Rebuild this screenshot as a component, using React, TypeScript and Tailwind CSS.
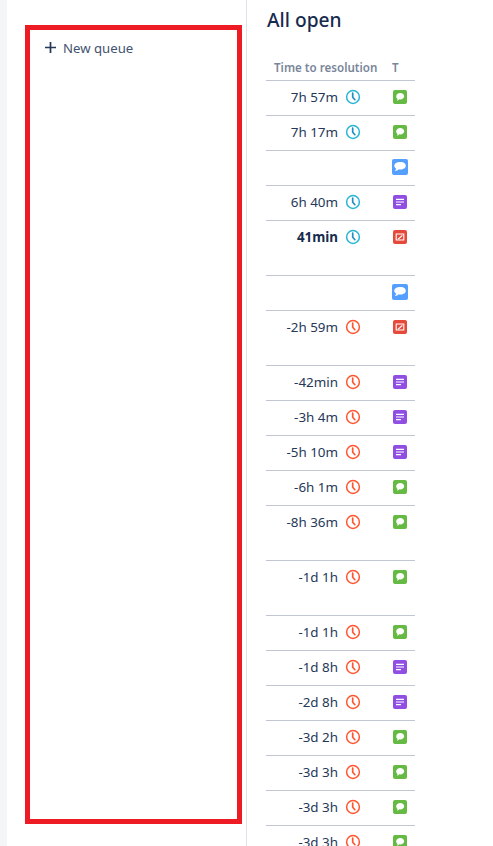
const font = { fontFamily: '"Noto Sans", "Open Sans", sans-serif' };

type Kind = "chat" | "bubble" | "note" | "incident";
type Row = { time?: string; over?: boolean; bold?: boolean; kind: Kind; tall?: boolean };

const rows: Row[] = [
  { time: "7h 57m", kind: "chat" },
  { time: "7h 17m", kind: "chat" },
  { kind: "bubble" },
  { time: "6h 40m", kind: "note" },
  { time: "41min", bold: true, kind: "incident", tall: true },
  { kind: "bubble" },
  { time: "-2h 59m", over: true, kind: "incident", tall: true },
  { time: "-42min", over: true, kind: "note" },
  { time: "-3h 4m", over: true, kind: "note" },
  { time: "-5h 10m", over: true, kind: "note" },
  { time: "-6h 1m", over: true, kind: "chat" },
  { time: "-8h 36m", over: true, kind: "chat", tall: true },
  { time: "-1d 1h", over: true, kind: "chat", tall: true },
  { time: "-1d 1h", over: true, kind: "chat" },
  { time: "-1d 8h", over: true, kind: "note" },
  { time: "-2d 8h", over: true, kind: "note" },
  { time: "-3d 2h", over: true, kind: "chat" },
  { time: "-3d 3h", over: true, kind: "chat" },
  { time: "-3d 3h", over: true, kind: "chat" },
  { time: "-3d 3h", over: true, kind: "chat" },
];

function Clock({ over }: { over?: boolean }) {
  return (
    <svg width="16" height="16" viewBox="0 0 16 16" fill="none" className="shrink-0">
      <circle cx="8" cy="8" r="6.4" stroke={over ? "#ff5630" : "#29b5d6"} strokeWidth="1.5" />
      <path d="M7.7 4.2V8.2L9.9 10.7" stroke={over ? "#ff5630" : "#1f8fbf"} strokeWidth="1.7" strokeLinecap="round" strokeLinejoin="round" />
    </svg>
  );
}

function TypeIcon({ kind }: { kind: Kind }) {
  if (kind === "bubble") {
    return (
      <svg width="16" height="16" viewBox="0 0 16 16" className="block">
        <rect width="16" height="16" rx="2" fill="#4c9aff" opacity="0.95" />
        <path d="M8.3 3c3.2 0 5.5 1.5 5.5 3.7s-2.3 3.7-5.5 3.7c-.6 0-1.1 0-1.6-.2-.8.9-2.1 1.7-3.9 1.8.7-.7 1.2-1.5 1.4-2.5C2.8 8.8 2.3 7.8 2.3 6.7 2.3 4.5 5 3 8.3 3z" fill="#fff" />
      </svg>
    );
  }
  if (kind === "chat") {
    return (
      <svg width="14" height="14" viewBox="0 0 14 14" className="block">
        <rect width="14" height="14" rx="2" fill="#65ba43" />
        <path d="M7.2 3c2.2 0 4 1.4 4 3.2s-1.8 3.2-4 3.2c-.3 0-.6 0-.9-.1-.5.6-1.4 1.4-2.4 1.5.4-.6.6-1.2.7-1.9-.9-.6-1.4-1.6-1.4-2.7C3.2 4.4 5 3 7.2 3z" fill="#fff" />
      </svg>
    );
  }
  if (kind === "note") {
    return (
      <svg width="14" height="14" viewBox="0 0 14 14" className="block">
        <rect width="14" height="14" rx="2" fill="#904ee2" />
        <path d="M3 4.4h8M3 7h8M3 9.6h5" stroke="#fff" strokeWidth="1.1" />
      </svg>
    );
  }
  return (
    <svg width="14" height="14" viewBox="0 0 14 14" className="block">
      <rect width="14" height="14" rx="2" fill="#e5493a" />
      <path d="M3.2 4h7.6v6H3.2z" stroke="#fff" strokeWidth="1.1" fill="none" />
      <path d="M5 9.2l4.4-3.8" stroke="#fff" strokeWidth="1.2" />
    </svg>
  );
}

export default function App() {
  return (
    <div className="flex h-[846px] w-[493px] overflow-hidden bg-white text-[#172b4d]" style={font}>
      <div className="w-[7px] shrink-0 bg-[#f4f5f7]" />
      <aside className="w-[240px] shrink-0 border-r border-[#dfe1e6] pl-[18px] pr-[4px] pt-[25px]">
        <div className="h-[799px] w-[217px] border-[5px] border-[#ed1c24] pl-[14px] pt-[9px]">
          <div className="flex h-[20px] items-center gap-[6px] text-[13.2px] text-[#42526e]">
            <svg width="13" height="13" viewBox="0 0 13 13" className="shrink-0 -translate-y-[2px]">
              <path d="M6.5 1v11M1 6.5h11" stroke="#253858" strokeWidth="1.7" />
            </svg>
            <span>New queue</span>
          </div>
        </div>
      </aside>
      <main className="flex-1 pl-[19px]">
        <h1 className="mt-[6px] pl-[1px] text-[19.2px] font-medium leading-[28px]">All open</h1>
        <div className="mt-[12px] w-[149px]">
          <div className="flex h-[35px] items-end border-b border-[#c1c7d0] pb-[4px] text-[11.6px] font-semibold text-[#7a869a]">
            <span className="w-[126px] whitespace-nowrap pl-[8px]">Time to resolution</span>
            <span>T</span>
          </div>
          {rows.map((r, i) => (
            <div key={i} className={`flex items-start border-b border-[#c1c7d0] pt-[7px] ${r.tall ? "h-[55px]" : "h-[35px]"}`}>
              <div className="flex h-[18px] w-[95px] shrink-0 items-center justify-end gap-[7px]">
                {r.time && (
                  <>
                    <span className={`whitespace-nowrap text-[13.4px] ${r.bold ? "font-bold" : "text-[#253858]"}`}>{r.time}</span>
                    <Clock over={r.over} />
                  </>
                )}
              </div>
              <div className="ml-[31px] flex h-[18px] w-[16px] items-center justify-center">
                <TypeIcon kind={r.kind} />
              </div>
            </div>
          ))}
        </div>
      </main>
    </div>
  );
}
